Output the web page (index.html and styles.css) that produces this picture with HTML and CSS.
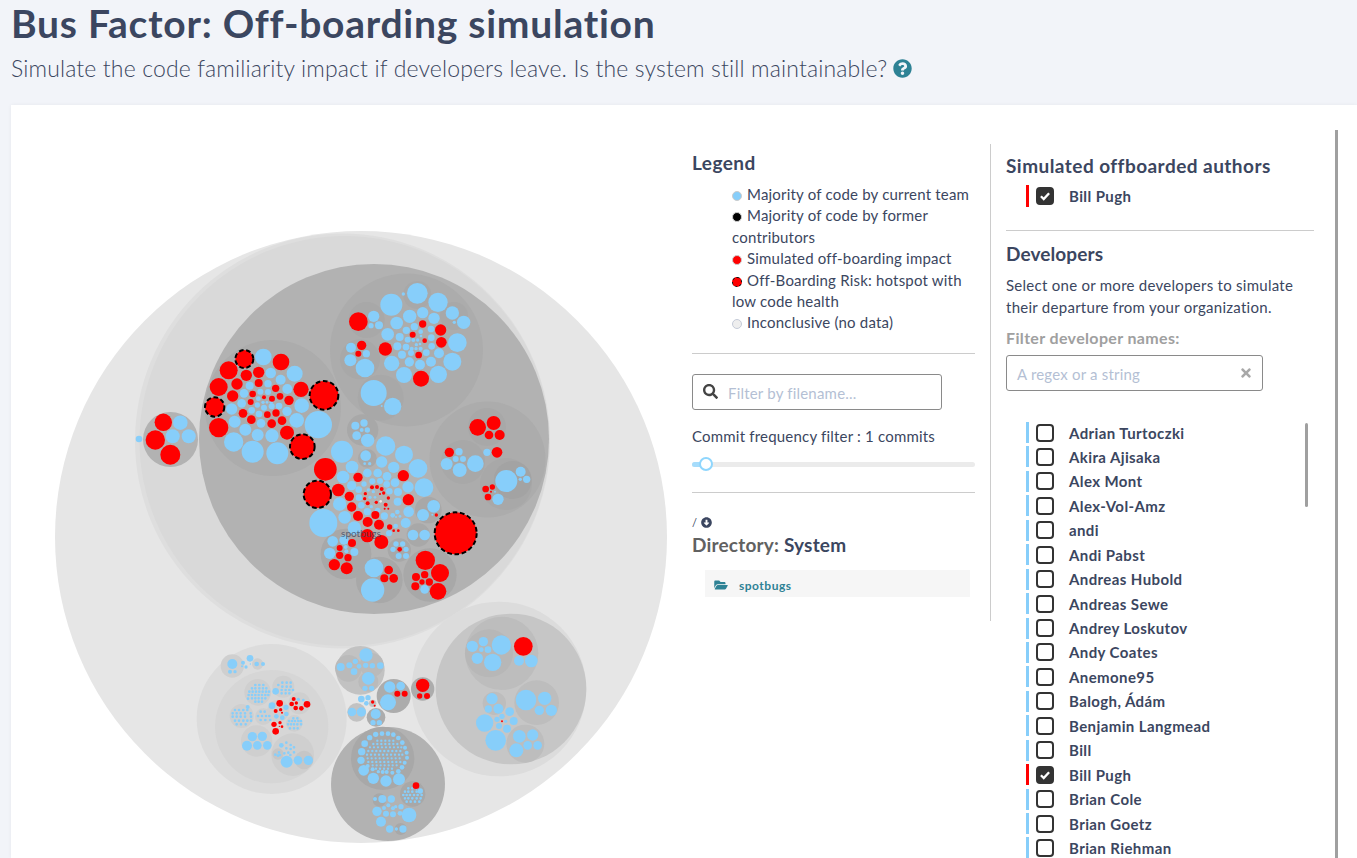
FILE: index.html
```html
<!DOCTYPE html>
<html lang="en">
<head>
<meta charset="utf-8">
<title>Bus Factor: Off-boarding simulation</title>
<link rel="stylesheet" href="styles.css">
</head>
<body>
<header class="head">
  <h1>Bus Factor: Off-boarding simulation</h1>
  <p class="sub">Simulate the code familiarity impact if developers leave. Is the system still maintainable?
    <svg class="help" viewBox="0 0 512 512"><path d="M504 256c0 136.997-111.043 248-248 248S8 392.997 8 256C8 119.083 119.043 8 256 8s248 111.083 248 248zM262.655 90c-54.497 0-89.255 22.957-116.549 63.758-3.536 5.286-2.353 12.415 2.715 16.258l34.699 26.31c5.205 3.947 12.621 3.008 16.665-2.122 17.864-22.658 30.113-35.797 57.303-35.797 20.429 0 45.698 13.148 45.698 32.958 0 14.976-12.363 22.667-32.534 33.976C247.128 238.528 216 254.941 216 296v4c0 6.627 5.373 12 12 12h56c6.627 0 12-5.373 12-12v-1.333c0-28.462 83.186-29.647 83.186-106.667 0-58.002-60.165-102-116.531-102zM256 338c-25.365 0-46 20.635-46 46 0 25.364 20.635 46 46 46s46-20.636 46-46c0-25.365-20.635-46-46-46z"/></svg>
  </p>
</header>
<main class="card">
  <svg class="map" viewBox="11 105 665 753">
    <circle class="g0" cx="361" cy="537" r="306"/>
    <circle class="g1" cx="342.5" cy="441" r="207.5"/>
    <circle class="g2" cx="344.5" cy="441" r="205"/>
    <circle class="g4" cx="374" cy="439" r="175"/>
    <circle class="g4" cx="170.5" cy="439.5" r="27.5"/>
    <circle class="g5" cx="273" cy="408" r="68"/>
    <circle class="g5" cx="406.5" cy="350" r="76.5"/>
    <circle class="g5" cx="487.5" cy="459.5" r="58"/>
    <circle class="g6" cx="487" cy="427" r="19"/>
    <circle class="g6" cx="463" cy="462" r="22"/>
    <circle class="g6" cx="506" cy="484" r="26"/>
    <circle class="g7" cx="512.7" cy="480" r="19"/>
    <circle class="g6" cx="366.7" cy="320" r="18"/>
    <circle class="g6" cx="360" cy="359.3" r="20"/>
    <circle class="g6" cx="380.7" cy="397.7" r="23"/>
    <circle class="g6" cx="417.3" cy="295" r="14"/>
    <circle class="g6" cx="454" cy="316" r="14"/>
    <circle class="blue" cx="139" cy="439" r="3.3"/>
    <circle class="blue" cx="180.3" cy="422.7" r="7.3"/>
    <circle class="blue" cx="172.7" cy="436.3" r="7"/>
    <circle class="blue" cx="188.7" cy="436.3" r="7"/>
    <circle class="red" cx="163.3" cy="422.3" r="8.7"/>
    <circle class="red" cx="155.3" cy="440" r="9.7"/>
    <circle class="red" cx="170.3" cy="454.7" r="10"/>

    <g transform="translate(190 260) scale(.33333)">
      <g class="blue">
        <circle cx="220" cy="291" r="25"/><circle cx="314" cy="341" r="24"/><circle cx="242" cy="339" r="16"/><circle cx="272" cy="359" r="15"/><circle cx="179" cy="377" r="12"/><circle cx="234" cy="371" r="11"/><circle cx="292" cy="387" r="15"/><circle cx="162" cy="400" r="13"/><circle cx="211" cy="395" r="9"/><circle cx="234" cy="396" r="9"/><circle cx="205" cy="416" r="7"/><circle cx="155" cy="430" r="13"/><circle cx="202" cy="435" r="8"/><circle cx="219" cy="427" r="5"/><circle cx="231" cy="427" r="4"/><circle cx="244" cy="427" r="5"/><circle cx="222" cy="443" r="9"/><circle cx="245" cy="439" r="9"/><circle cx="267" cy="438" r="10"/><circle cx="335" cy="437" r="22"/><circle cx="125" cy="447" r="17"/><circle cx="185" cy="451" r="10"/><circle cx="291" cy="454" r="14"/><circle cx="207" cy="462" r="10"/><circle cx="320" cy="481" r="22"/><circle cx="385" cy="494" r="41"/><circle cx="134" cy="485" r="18"/><circle cx="213" cy="490" r="13"/><circle cx="166" cy="509" r="18"/><circle cx="203" cy="525" r="18"/><circle cx="246" cy="527" r="20"/><circle cx="131" cy="546" r="29"/><circle cx="188" cy="575" r="33"/><circle cx="262" cy="580" r="33"/>
      </g>
      <g class="red">
        <circle cx="273" cy="306" r="25"/><circle cx="116" cy="331" r="27"/><circle cx="206" cy="337" r="17"/><circle cx="169" cy="346" r="17"/><circle cx="86" cy="381" r="27"/><circle cx="141" cy="372" r="17"/><circle cx="206" cy="369" r="12"/><circle cx="257" cy="385" r="11"/><circle cx="333" cy="388" r="23"/><circle cx="128" cy="408" r="17"/><circle cx="188" cy="402" r="10"/><circle cx="222" cy="412" r="6"/><circle cx="246" cy="416" r="9"/><circle cx="270" cy="409" r="10"/><circle cx="297" cy="421" r="14"/><circle cx="182" cy="426" r="9"/><circle cx="159" cy="460" r="13"/><circle cx="232" cy="464" r="10"/><circle cx="258" cy="459" r="11"/><circle cx="184" cy="479" r="13"/><circle cx="276" cy="482" r="13"/><circle cx="245" cy="491" r="13"/><circle cx="86" cy="503" r="29"/><circle cx="291" cy="518" r="21"/>
      </g>
      <g class="risk">
        <circle cx="163" cy="297" r="27"/><circle cx="402" cy="406" r="43"/><circle cx="74" cy="441" r="29"/><circle cx="337" cy="560" r="37"/>
      </g>
    </g>

    <g transform="translate(330 270) scale(.33333)">
      <g class="blue">
        <circle cx="131" cy="139" r="17"/><circle cx="147" cy="166" r="12"/><circle cx="123" cy="167" r="8"/><circle cx="63" cy="233" r="15"/><circle cx="109" cy="251" r="11"/><circle cx="61" cy="271" r="18"/><circle cx="105" cy="294" r="28"/><circle cx="131" cy="369" r="39"/><circle cx="188" cy="409" r="26"/><circle cx="155" cy="408" r="3"/>
        <circle cx="184" cy="104" r="33"/><circle cx="262" cy="70" r="31"/><circle cx="324" cy="97" r="29"/><circle cx="220" cy="72" r="5"/><circle cx="367" cy="129" r="20"/><circle cx="401" cy="157" r="20"/><circle cx="373" cy="157" r="5"/><circle cx="239" cy="139" r="20"/><circle cx="278" cy="128" r="17"/><circle cx="312" cy="145" r="17"/><circle cx="200" cy="159" r="19"/><circle cx="253" cy="170" r="11"/><circle cx="229" cy="181" r="11"/><circle cx="272" cy="185" r="7"/><circle cx="303" cy="177" r="10"/><circle cx="173" cy="193" r="19"/><circle cx="209" cy="201" r="12"/><circle cx="304" cy="203" r="10"/><circle cx="382" cy="218" r="28"/><circle cx="233" cy="209" r="9"/><circle cx="250" cy="210" r="6"/><circle cx="263" cy="210" r="5"/><circle cx="273" cy="198" r="4"/><circle cx="202" cy="229" r="12"/><circle cx="228" cy="231" r="10"/><circle cx="259" cy="224" r="5"/><circle cx="270" cy="222" r="4"/><circle cx="305" cy="229" r="10"/><circle cx="245" cy="236" r="6"/><circle cx="258" cy="236" r="5"/><circle cx="272" cy="236" r="6"/><circle cx="289" cy="248" r="10"/><circle cx="327" cy="250" r="15"/><circle cx="216" cy="254" r="12"/><circle cx="243" cy="249" r="9"/><circle cx="367" cy="275" r="27"/><circle cx="185" cy="280" r="23"/><circle cx="238" cy="276" r="14"/><circle cx="303" cy="275" r="15"/><circle cx="270" cy="284" r="15"/><circle cx="222" cy="315" r="24"/><circle cx="325" cy="313" r="26"/>
      </g>
      <g class="red">
        <circle cx="85" cy="155" r="28"/><circle cx="95" cy="226" r="14"/><circle cx="85" cy="251" r="9"/><circle cx="278" cy="162" r="11"/><circle cx="332" cy="180" r="17"/><circle cx="248" cy="194" r="9"/><circle cx="284" cy="212" r="7"/><circle cx="334" cy="217" r="16"/><circle cx="166" cy="237" r="20"/><circle cx="266" cy="255" r="10"/><circle cx="273" cy="326" r="24"/>
      </g>
    </g>

    <g transform="translate(430 400) scale(.33333)">
      <g class="blue">
        <circle cx="87" cy="155" r="11"/><circle cx="77" cy="177" r="9"/><circle cx="99" cy="177" r="9"/><circle cx="50" cy="192" r="18"/><circle cx="89" cy="210" r="21"/><circle cx="136" cy="191" r="25"/><circle cx="171" cy="157" r="11"/><circle cx="229" cy="243" r="33"/><circle cx="272" cy="215" r="15"/><circle cx="290" cy="238" r="11"/><circle cx="271" cy="238" r="5"/><circle cx="195" cy="275" r="3"/><circle cx="204" cy="298" r="17"/>
      </g>
      <g class="red">
        <circle cx="143" cy="82" r="25"/><circle cx="191" cy="69" r="21"/><circle cx="177" cy="105" r="13"/><circle cx="209" cy="105" r="15"/><circle cx="58" cy="157" r="14"/><circle cx="201" cy="157" r="16"/><circle cx="167" cy="267" r="10"/><circle cx="187" cy="261" r="8"/><circle cx="174" cy="291" r="10"/><circle cx="183" cy="275" r="3"/>
      </g>
      <circle class="risk" cx="77" cy="400" r="63"/>
    </g>

    <g transform="translate(290 420) scale(.33333)">
      <g class="g6">
        <circle cx="218" cy="30" r="47"/><circle cx="232" cy="115" r="28"/><circle cx="415" cy="270" r="40"/><circle cx="385" cy="345" r="35"/><circle cx="328" cy="390" r="35"/><circle cx="168" cy="402" r="76"/><circle cx="268" cy="480" r="70"/><circle cx="420" cy="465" r="80"/>
      </g>
      <g class="blue">
        <circle cx="196" cy="17" r="12"/><circle cx="222" cy="9" r="11"/><circle cx="215" cy="30" r="6"/><circle cx="232" cy="30" r="8"/><circle cx="200" cy="47" r="13"/><circle cx="233" cy="61" r="20"/><circle cx="227" cy="107" r="16"/><circle cx="224" cy="131" r="4"/><circle cx="239" cy="131" r="5"/>
        <circle cx="100" cy="309" r="42"/><circle cx="156" cy="95" r="33"/><circle cx="287" cy="78" r="29"/><circle cx="342" cy="104" r="27"/><circle cx="384" cy="145" r="28"/><circle cx="402" cy="203" r="28"/><circle cx="186" cy="141" r="19"/><circle cx="275" cy="126" r="17"/><circle cx="311" cy="142" r="17"/><circle cx="159" cy="171" r="19"/><circle cx="232" cy="159" r="13"/><circle cx="263" cy="159" r="13"/><circle cx="291" cy="169" r="13"/><circle cx="315" cy="188" r="13"/><circle cx="354" cy="201" r="17"/><circle cx="185" cy="197" r="14"/><circle cx="247" cy="184" r="9"/><circle cx="270" cy="183" r="9"/><circle cx="290" cy="193" r="10"/><circle cx="324" cy="216" r="12"/><circle cx="206" cy="209" r="10"/><circle cx="222" cy="192" r="8"/><circle cx="298" cy="214" r="10"/><circle cx="207" cy="233" r="10"/><circle cx="235" cy="210" r="5"/><circle cx="250" cy="215" r="5"/><circle cx="240" cy="232" r="5"/><circle cx="255" cy="232" r="4"/><circle cx="323" cy="245" r="12"/><circle cx="149" cy="252" r="20"/><circle cx="214" cy="256" r="10"/><circle cx="244" cy="260" r="5"/><circle cx="232" cy="275" r="11"/><circle cx="263" cy="271" r="8"/><circle cx="356" cy="275" r="16"/><circle cx="283" cy="288" r="11"/><circle cx="164" cy="292" r="19"/><circle cx="308" cy="286" r="7"/><circle cx="322" cy="276" r="7"/><circle cx="330" cy="289" r="4"/><circle cx="318" cy="291" r="3"/><circle cx="347" cy="309" r="15"/><circle cx="193" cy="324" r="20"/><circle cx="317" cy="318" r="7"/><circle cx="297" cy="340" r="9"/>
        <circle cx="399" cy="285" r="18"/><circle cx="431" cy="259" r="19"/><circle cx="427" cy="284" r="3"/><circle cx="369" cy="345" r="16"/><circle cx="404" cy="345" r="16"/>
        <circle cx="318" cy="372" r="8"/><circle cx="338" cy="372" r="8"/><circle cx="309" cy="388" r="8"/><circle cx="348" cy="388" r="8"/><circle cx="326" cy="408" r="9"/><circle cx="348" cy="408" r="9"/>
        <circle cx="128" cy="364" r="16"/><circle cx="162" cy="360" r="14"/><circle cx="167" cy="381" r="6"/><circle cx="119" cy="400" r="17"/><circle cx="169" cy="394" r="6"/><circle cx="193" cy="396" r="12"/>
        <circle cx="252" cy="444" r="28"/><circle cx="248" cy="510" r="35"/><circle cx="404" cy="508" r="13"/>
      </g>
      <circle class="pale" cx="272" cy="244" r="4"/>
      <g class="red">
        <circle cx="106" cy="148" r="34"/><circle cx="340" cy="167" r="17"/><circle cx="204" cy="172" r="14"/><circle cx="145" cy="210" r="19"/><circle cx="246" cy="202" r="6"/><circle cx="261" cy="201" r="6"/><circle cx="275" cy="207" r="6"/><circle cx="355" cy="239" r="17"/><circle cx="178" cy="229" r="14"/><circle cx="226" cy="221" r="5"/><circle cx="281" cy="219" r="5"/><circle cx="270" cy="222" r="3"/><circle cx="224" cy="236" r="5"/><circle cx="295" cy="234" r="5"/><circle cx="185" cy="261" r="14"/><circle cx="233" cy="250" r="6"/><circle cx="259" cy="247" r="5"/><circle cx="287" cy="254" r="6"/><circle cx="284" cy="266" r="3"/><circle cx="295" cy="266" r="3"/><circle cx="256" cy="285" r="12"/><circle cx="204" cy="288" r="15"/><circle cx="233" cy="306" r="15"/><circle cx="267" cy="314" r="15"/><circle cx="232" cy="347" r="20"/><circle cx="274" cy="366" r="21"/><circle cx="299" cy="321" r="8"/><circle cx="311" cy="332" r="4"/><circle cx="325" cy="332" r="4"/><circle cx="439" cy="285" r="5"/><circle cx="329" cy="388" r="7"/>
        <circle cx="186" cy="369" r="12"/><circle cx="149" cy="384" r="9"/><circle cx="149" cy="406" r="11"/><circle cx="174" cy="413" r="11"/><circle cx="133" cy="434" r="17"/><circle cx="170" cy="445" r="18"/>
        <circle cx="296" cy="450" r="13"/><circle cx="283" cy="475" r="12"/><circle cx="311" cy="475" r="13"/>
        <circle cx="406" cy="421" r="29"/><circle cx="450" cy="459" r="27"/><circle cx="444" cy="514" r="25"/><circle cx="378" cy="471" r="12"/><circle cx="404" cy="464" r="11"/><circle cx="418" cy="486" r="11"/><circle cx="396" cy="486" r="8"/><circle cx="376" cy="499" r="12"/>
      </g>
      <circle class="risk" cx="82" cy="223" r="41"/>
    </g>
    <text class="label" x="361" y="537">spotbugs</text>

    <g transform="translate(190 640) scale(.33333)">
      <circle class="l1" cx="245" cy="237" r="225"/>
      <circle class="l2" cx="245" cy="260" r="170"/>
      <g class="l3">
        <circle cx="127" cy="78" r="35"/><circle cx="203" cy="72" r="17"/><circle cx="203" cy="157" r="40"/><circle cx="280" cy="140" r="33"/><circle cx="328" cy="190" r="33"/><circle cx="265" cy="212" r="33"/><circle cx="155" cy="228" r="36"/><circle cx="220" cy="230" r="25"/><circle cx="313" cy="250" r="25"/><circle cx="200" cy="303" r="47"/><circle cx="308" cy="344" r="64"/>
      </g>
      <circle class="l4" cx="264" cy="342" r="17"/>
      <circle class="l4" cx="342" cy="360" r="28"/>
      <circle class="g3" cx="511" cy="91" r="73"/>
      <circle class="g3b" cx="475" cy="85" r="40"/>
      <circle class="g3b" cx="545" cy="75" r="36"/>
      <circle class="g3b" cx="535" cy="125" r="30"/>
      <circle class="g5" cx="611" cy="168" r="51"/>
      <circle class="g3" cx="500" cy="217" r="28"/>
      <circle class="g5" cx="558" cy="232" r="28"/>
      <circle class="g4" cx="594" cy="432" r="171"/>
      <circle class="g6" cx="578" cy="355" r="95"/>
      <circle class="g6" cx="668" cy="462" r="38"/>
      <circle class="g6" cx="568" cy="480" r="20"/>
      <circle class="g6" cx="632" cy="567" r="18"/>
      <circle class="g3" cx="548" cy="190" r="11"/>
      <path class="dots r5" d="M196 135h0M208 135h0M220 135h0M186 145h0M196 145h0M208 145h0M219 145h0M229 145h0M178 155h0M188 155h0M198 155h0M208 155h0M218 155h0M228 155h0M237 155h0M176 165h0M186 165h0M196 165h0M206 165h0M216 165h0M226 165h0M235 165h0M174 176h0M186 175h0M196 175h0M206 175h0M216 175h0M226 175h0M196 185h0M206 185h0M216 185h0M265 135h0M277 128h0M290 128h0M302 128h0M277 140h0M290 140h0M302 140h0M275 150h0M287 150h0M298 150h0M309 150h0M275 160h0M287 160h0M298 160h0M135 210h0M147 210h0M160 210h0M172 210h0M128 220h0M140 220h0M152 220h0M165 220h0M182 220h0M128 230h0M140 230h0M152 230h0M165 230h0M183 230h0M135 242h0M147 242h0M160 242h0M172 242h0M183 242h0M140 253h0M153 253h0M167 253h0M212 215h0M224 215h0M204 228h0M216 228h0M228 228h0M238 228h0M212 240h0M226 240h0M241 240h0M310 235h0M322 235h0M297 243h0M306 243h0M315 243h0M325 243h0M333 243h0M294 253h0M303 253h0M312 253h0M322 253h0M333 253h0M300 265h0M312 265h0M323 265h0M289 308h0M302 315h0M289 325h0M302 327h0M312 322h0M312 337h0M295 338h0M283 340h0M301 345h0M267 337h0M264 347h0M256 344h0M270 345h0M655 445h0M667 445h0M680 445h0M645 455h0M655 455h0M667 455h0M680 455h0M640 465h0M650 465h0M660 465h0M672 465h0M683 465h0M695 465h0M645 475h0M655 475h0M667 475h0M680 475h0M692 475h0M650 485h0M662 485h0M675 485h0M688 485h0"/>
      <path class="dots r4" d="M562 302h0M574 302h0M586 302h0M598 302h0M610 302h0M550 312h0M562 312h0M574 312h0M586 312h0M598 312h0M610 312h0M622 312h0M540 322h0M552 322h0M564 322h0M576 322h0M588 322h0M600 322h0M612 322h0M624 322h0M634 322h0M535 333h0M547 333h0M559 333h0M571 333h0M583 333h0M595 333h0M607 333h0M619 333h0M631 333h0M531 344h0M543 344h0M555 344h0M567 344h0M579 344h0M591 344h0M603 344h0M615 344h0M627 344h0M637 344h0M533 355h0M545 355h0M557 355h0M569 355h0M581 355h0M593 355h0M605 355h0M617 355h0M629 355h0M535 366h0M547 366h0M559 366h0M571 366h0M583 366h0M595 366h0M607 366h0M619 366h0M631 366h0M548 376h0M560 376h0M572 376h0M584 376h0M596 376h0M608 376h0M620 376h0M558 386h0M570 386h0M582 386h0M594 386h0M606 386h0"/>
      <g class="blue">
        <circle cx="127" cy="72" r="15"/><circle cx="120" cy="95" r="6"/><circle cx="135" cy="95" r="5"/><circle cx="159" cy="68" r="6"/><circle cx="180" cy="55" r="10"/><circle cx="168" cy="81" r="5"/><circle cx="156" cy="79" r="3"/><circle cx="181" cy="72" r="2"/><circle cx="200" cy="72" r="7"/><circle cx="219" cy="72" r="6"/>
        <circle cx="257" cy="154" r="10"/><circle cx="325" cy="178" r="5"/><circle cx="340" cy="180" r="4"/><circle cx="173" cy="201" r="6"/>
        <circle cx="246" cy="197" r="10"/><circle cx="288" cy="202" r="8"/><circle cx="289" cy="222" r="7"/><circle cx="259" cy="229" r="7"/><circle cx="277" cy="233" r="7"/>
        <circle cx="187" cy="290" r="14"/><circle cx="217" cy="289" r="14"/><circle cx="171" cy="317" r="15"/><circle cx="202" cy="316" r="13"/><circle cx="232" cy="316" r="13"/>
        <circle cx="274" cy="316" r="7"/><circle cx="290" cy="365" r="18"/><circle cx="324" cy="361" r="13"/><circle cx="355" cy="361" r="14"/>
        <circle cx="528" cy="45" r="20"/><circle cx="452" cy="81" r="12"/><circle cx="478" cy="76" r="9"/><circle cx="496" cy="64" r="8"/><circle cx="507" cy="79" r="7"/><circle cx="492" cy="95" r="10"/><circle cx="527" cy="76" r="8"/><circle cx="547" cy="77" r="8"/><circle cx="571" cy="77" r="10"/><circle cx="535" cy="115" r="19"/><circle cx="525" cy="145" r="8"/><circle cx="545" cy="145" r="8"/>
        <circle cx="599" cy="141" r="17"/><circle cx="632" cy="138" r="13"/><circle cx="594" cy="187" r="24"/><circle cx="514" cy="177" r="10"/><circle cx="534" cy="173" r="8"/><circle cx="529" cy="190" r="7"/>
        <circle cx="486" cy="216" r="13"/><circle cx="514" cy="216" r="14"/><circle cx="557" cy="222" r="15"/><circle cx="549" cy="248" r="8"/><circle cx="568" cy="248" r="8"/>
        <circle cx="550" cy="415" r="17"/><circle cx="588" cy="423" r="17"/><circle cx="627" cy="418" r="18"/><circle cx="521" cy="391" r="16"/><circle cx="513" cy="361" r="11"/><circle cx="515" cy="335" r="11"/><circle cx="524" cy="311" r="10"/><circle cx="539" cy="293" r="8"/><circle cx="557" cy="283" r="8"/><circle cx="576" cy="281" r="7"/><circle cx="594" cy="281" r="7"/><circle cx="610" cy="284" r="7"/><circle cx="625" cy="294" r="7"/><circle cx="637" cy="308" r="7"/><circle cx="645" cy="323" r="6"/><circle cx="650" cy="338" r="6"/><circle cx="651" cy="353" r="6"/><circle cx="644" cy="368" r="6"/><circle cx="636" cy="382" r="7"/><circle cx="625" cy="394" r="7"/><circle cx="607" cy="398" r="6"/><circle cx="590" cy="396" r="6"/><circle cx="578" cy="396" r="6"/><circle cx="565" cy="395" r="5"/><circle cx="548" cy="388" r="6"/><circle cx="533" cy="378" r="6"/>
        <circle cx="555" cy="477" r="6"/><circle cx="577" cy="477" r="12"/><circle cx="604" cy="477" r="11"/><circle cx="691" cy="453" r="8"/><circle cx="561" cy="514" r="14"/><circle cx="582" cy="504" r="6"/><circle cx="595" cy="496" r="6"/><circle cx="609" cy="505" r="6"/><circle cx="617" cy="500" r="5"/><circle cx="633" cy="500" r="8"/><circle cx="588" cy="521" r="9"/><circle cx="609" cy="523" r="9"/><circle cx="630" cy="520" r="7"/><circle cx="657" cy="525" r="22"/><circle cx="573" cy="545" r="15"/><circle cx="599" cy="567" r="11"/><circle cx="619" cy="567" r="5"/><circle cx="639" cy="567" r="11"/>
      </g>
      <g class="red">
        <circle cx="311" cy="177" r="6"/><circle cx="319" cy="189" r="5"/><circle cx="351" cy="193" r="10"/><circle cx="305" cy="192" r="7"/><circle cx="317" cy="204" r="7"/><circle cx="334" cy="205" r="7"/>
        <circle cx="269" cy="190" r="10"/><circle cx="257" cy="213" r="6"/><circle cx="272" cy="209" r="5"/><circle cx="276" cy="218" r="3"/><circle cx="252" cy="253" r="8"/><circle cx="270" cy="248" r="5"/><circle cx="257" cy="274" r="10"/><circle cx="268" cy="259" r="2"/><circle cx="276" cy="260" r="4"/>
        <circle cx="622" cy="161" r="9"/><circle cx="644" cy="161" r="9"/><circle cx="548" cy="186" r="5"/><circle cx="554" cy="197" r="3"/><circle cx="678" cy="437" r="10"/>
      </g>
    </g>

    <g transform="translate(410 600) scale(.33333)">
      <circle class="l1" cx="267" cy="267" r="262"/>
      <circle class="s1" cx="303" cy="267" r="226"/>
      <circle class="s2" cx="275" cy="160" r="110"/>
      <circle class="s3" cx="237" cy="160" r="72"/>
      <circle class="s2" cx="380" cy="308" r="67"/>
      <circle class="s2" cx="253" cy="310" r="35"/>
      <circle class="s2" cx="346" cy="431" r="57"/>
      <circle class="g5" cx="38" cy="267" r="35"/>
      <g class="blue">
        <circle cx="187" cy="139" r="17"/><circle cx="220" cy="125" r="14"/><circle cx="214" cy="149" r="7"/><circle cx="234" cy="149" r="10"/><circle cx="202" cy="175" r="17"/><circle cx="248" cy="187" r="26"/><circle cx="274" cy="135" r="29"/><circle cx="327" cy="182" r="15"/><circle cx="364" cy="183" r="19"/>
        <circle cx="246" cy="296" r="17"/><circle cx="235" cy="327" r="11"/><circle cx="265" cy="326" r="15"/><circle cx="348" cy="300" r="31"/><circle cx="404" cy="295" r="20"/><circle cx="388" cy="331" r="14"/><circle cx="424" cy="331" r="17"/><circle cx="299" cy="335" r="13"/><circle cx="276" cy="349" r="8"/><circle cx="261" cy="358" r="8"/><circle cx="287" cy="364" r="5"/><circle cx="311" cy="363" r="12"/><circle cx="224" cy="369" r="26"/><circle cx="267" cy="378" r="9"/><circle cx="291" cy="386" r="12"/><circle cx="257" cy="421" r="31"/><circle cx="328" cy="409" r="19"/><circle cx="368" cy="405" r="17"/><circle cx="353" cy="436" r="13"/><circle cx="383" cy="436" r="13"/><circle cx="319" cy="451" r="21"/>
      </g>
      <g class="red">
        <circle cx="340" cy="139" r="28"/><circle cx="276" cy="364" r="3"/><circle cx="38" cy="256" r="20"/><circle cx="29" cy="288" r="8"/><circle cx="51" cy="288" r="9"/>
      </g>
    </g>
  </svg>

  <section class="controls">
    <h2 class="wide">Legend</h2>
    <ul class="legend">
      <li><span class="dot dot-blue"></span>Majority of code by current team</li>
      <li><span class="dot dot-black"></span>Majority of code by former contributors</li>
      <li><span class="dot dot-red"></span>Simulated off-boarding impact</li>
      <li><span class="dot dot-risk"></span>Off-Boarding Risk: hotspot with low code health</li>
      <li><span class="dot dot-none"></span>Inconclusive (no data)</li>
    </ul>
    <hr class="rule rule-a">
    <div class="field field-file">
      <svg class="search" viewBox="0 0 512 512"><path d="M505 442.7L405.3 343c-4.5-4.5-10.6-7-17-7H372c27.6-35.3 44-79.7 44-128C416 93.1 322.9 0 208 0S0 93.1 0 208s93.1 208 208 208c48.3 0 92.7-16.4 128-44v16.3c0 6.4 2.5 12.5 7 17l99.7 99.7c9.4 9.4 24.6 9.4 33.9 0l28.3-28.3c9.4-9.4 9.4-24.6.1-34zM208 336c-70.7 0-128-57.2-128-128 0-70.7 57.2-128 128-128 70.7 0 128 57.2 128 128 0 70.7-57.2 128-128 128z"/></svg>
      <span class="placeholder">Filter by filename...</span>
    </div>
    <p class="freq">Commit frequency filter : 1 commits</p>
    <div class="slider"><span class="slider-fill"></span><span class="slider-knob"></span></div>
    <hr class="rule rule-b">
    <div class="crumb">/ <svg class="down" viewBox="0 0 512 512"><path d="M504 256c0 137-111 248-248 248S8 393 8 256 119 8 256 8s248 111 248 248zM212 140v116h-70.9c-10.7 0-16.1 13-8.5 20.5l114.9 114.3c4.7 4.7 12.2 4.7 16.9 0l114.9-114.3c7.6-7.6 2.2-20.5-8.5-20.5H300V140c0-6.6-5.4-12-12-12h-64c-6.6 0-12 5.4-12 12z"/></svg></div>
    <h3 class="dir"><span class="dir-key">Directory:</span> System</h3>
    <div class="tree-row">
      <svg class="folder" viewBox="0 0 576 512"><path d="M572.694 292.093L500.27 416.248A63.997 63.997 0 0 1 444.989 448H45.025c-18.523 0-30.064-20.093-20.731-36.093l72.424-124.155A64 64 0 0 1 152 256h399.964c18.523 0 30.064 20.093 20.73 36.093zM152 224h328v-48c0-26.51-21.49-48-48-48H272l-64-64H48C21.49 64 0 85.49 0 112v278.046l69.077-118.418C86.214 242.25 117.989 224 152 224z"/></svg>
      <span>spotbugs</span>
    </div>
  </section>

  <section class="authors">
    <h2 class="wide off-title">Simulated offboarded authors</h2>
    <div class="dev dev-off selected"><span class="box on"><svg viewBox="0 0 12 12"><path d="M2.5 6.2l2.4 2.4 4.6-5"/></svg></span><span class="name">Bill Pugh</span></div>
    <hr class="rule rule-c">
    <h2 class="dev-title">Developers</h2>
    <p class="hint">Select one or more developers to simulate their departure from your organization.</p>
    <label class="filter-label">Filter developer names:</label>
    <div class="field field-dev">
      <span class="placeholder">A regex or a string</span>
      <svg class="clear" viewBox="0 0 352 512"><path d="M242.72 256l100.07-100.07c12.28-12.28 12.28-32.19 0-44.48l-22.24-22.24c-12.28-12.28-32.19-12.28-44.48 0L176 189.28 75.93 89.21c-12.28-12.28-32.19-12.28-44.48 0L9.21 111.45c-12.28 12.28-12.28 32.19 0 44.48L109.28 256 9.21 356.07c-12.28 12.28-12.28 32.19 0 44.48l22.24 22.24c12.28 12.28 32.2 12.28 44.48 0L176 322.72l100.07 100.07c12.28 12.28 32.2 12.28 44.48 0l22.24-22.24c12.28-12.28 12.28-32.19 0-44.48L242.72 256z"/></svg>
    </div>
    <div class="devs">
      <span class="inner-thumb"></span>
      <div class="dev"><span class="box"></span><span class="name">Adrian Turtoczki</span></div>
      <div class="dev"><span class="box"></span><span class="name">Akira Ajisaka</span></div>
      <div class="dev"><span class="box"></span><span class="name">Alex Mont</span></div>
      <div class="dev"><span class="box"></span><span class="name">Alex-Vol-Amz</span></div>
      <div class="dev"><span class="box"></span><span class="name">andi</span></div>
      <div class="dev"><span class="box"></span><span class="name">Andi Pabst</span></div>
      <div class="dev"><span class="box"></span><span class="name">Andreas Hubold</span></div>
      <div class="dev"><span class="box"></span><span class="name">Andreas Sewe</span></div>
      <div class="dev"><span class="box"></span><span class="name">Andrey Loskutov</span></div>
      <div class="dev"><span class="box"></span><span class="name">Andy Coates</span></div>
      <div class="dev"><span class="box"></span><span class="name">Anemone95</span></div>
      <div class="dev"><span class="box"></span><span class="name">Balogh, Ádám</span></div>
      <div class="dev"><span class="box"></span><span class="name">Benjamin Langmead</span></div>
      <div class="dev"><span class="box"></span><span class="name">Bill</span></div>
      <div class="dev dev-off"><span class="box on"><svg viewBox="0 0 12 12"><path d="M2.5 6.2l2.4 2.4 4.6-5"/></svg></span><span class="name">Bill Pugh</span></div>
      <div class="dev"><span class="box"></span><span class="name">Brian Cole</span></div>
      <div class="dev"><span class="box"></span><span class="name">Brian Goetz</span></div>
      <div class="dev"><span class="box"></span><span class="name">Brian Riehman</span></div>
    </div>
  </section>
  <span class="page-thumb"></span>
</main>
</body>
</html>
```
FILE: styles.css
```css
* { box-sizing: border-box; }
html, body { height: 100%; overflow: hidden; }
body {
  margin: 0;
  background: #f2f4f9;
  color: #3b4660;
  font-family: Lato, "Liberation Sans", sans-serif;
  font-size: 15px;
  letter-spacing: .2px;
}
.head { height: 105px; padding-left: 11px; }
h1 { margin: 0; font-size: 39px; line-height: 46px; font-weight: 700; letter-spacing: .74px; }
.sub { margin: 0; padding-top: 5px; font-size: 23px; line-height: 34px; font-weight: 300; letter-spacing: .14px; display: flex; align-items: center; gap: 6px; }
.help { width: 19px; height: 19px; fill: #2e8295; }
.card {
  position: relative;
  display: flex;
  align-items: flex-start;
  margin-left: 11px;
  height: 753px;
  background: #fff;
  overflow: hidden;
  box-shadow: 0 0 4px rgba(0, 0, 0, .05);
}
.map { flex: none; width: 665px; height: 753px; }
.g0 { fill: #e6e6e6; }
.g1 { fill: #dedede; }
.g2 { fill: #d9d9d9; }
.g3 { fill: #c2c2c2; }
.g3b { fill: #bababa; }
.g4 { fill: #b2b2b2; }
.g5 { fill: #acacac; }
.g6 { fill: #a8a8a8; }
.g7 { fill: #a3a3a3; }
.l1 { fill: #dcdcdc; }
.l2 { fill: #d6d6d6; }
.l3 { fill: #cfcfcf; }
.l4 { fill: #c6c6c6; }
.s1 { fill: #c6c6c6; }
.s2 { fill: #bdbdbd; }
.s3 { fill: #b7b7b7; }
.blue { fill: #87cefa; }
.red { fill: #f00; }
.pale { fill: #e8e8e8; }
.risk { fill: #f00; stroke: #000; stroke-width: 6; stroke-dasharray: 14 8; }
.dots { fill: none; stroke: #87cefa; stroke-linecap: round; }
.r5 { stroke-width: 8; }
.r4 { stroke-width: 7; }
.label { font-size: 10px; fill: #3b4660; fill-opacity: .8; text-anchor: middle; letter-spacing: 0; }

.controls { flex: none; width: 283px; margin: 46px 15px 0 16px; }
h2 { margin: 0; font-size: 19px; line-height: 24px; font-weight: 700; letter-spacing: .1px; }
.wide { letter-spacing: .46px; }
.legend { list-style: none; margin: 9px 0 0; padding: 0 0 0 40px; font-size: 15px; line-height: 21.4px; }
.dot { display: inline-block; width: 10px; height: 10px; margin-right: 5px; border-radius: 50%; vertical-align: -1px; border: 1px solid #ccc; }
.dot-blue { background: #87cefa; }
.dot-black { background: #000; }
.dot-red { background: #f00; }
.dot-risk { background: #f00; border: 1.5px dashed #000; }
.dot-none { background: #eee; border-color: #c5cbd8; }
.rule { border: 0; border-top: 1px solid #ccc; margin: 0; }
.rule-a { margin-top: 19px; }
.field { display: flex; align-items: center; border: 1px solid #8a8a8a; border-radius: 3px; background: #fff; }
.field-file { width: 250px; height: 36px; margin-top: 20px; padding-left: 10px; gap: 10px; }
.field-dev { width: 257px; height: 36px; padding: 0 10px; justify-content: space-between; margin-top: 7px; }
.search { width: 15px; height: 15px; fill: #444; }
.placeholder { color: #b4bfd4; font-size: 15px; padding-top: 2px; }
.freq { margin: 15px 0 0; line-height: 22px; }
.slider { position: relative; height: 5px; margin-top: 15px; background: #ebebeb; border-radius: 3px; }
.slider-fill { position: absolute; left: 0; top: 0; width: 14px; height: 5px; background: #a6dcfb; border-radius: 3px; }
.slider-knob { position: absolute; left: 7px; top: -4.5px; width: 14px; height: 14px; border-radius: 50%; background: #fff; border: 2px solid #8fd6fd; }
.rule-b { margin-top: 25px; }
.crumb { margin-top: 23px; font-size: 11px; line-height: 14px; display: flex; align-items: center; gap: 4px; }
.down { width: 11px; height: 11px; fill: #3b4660; }
.dir { margin: 2px 0 0; font-size: 19px; line-height: 26px; font-weight: 700; letter-spacing: .2px; }
.dir-key { color: #616161; }
.tree-row { display: flex; align-items: center; gap: 11px; width: 265px; height: 27px; margin: 12px 0 0 13px; padding: 4px 0 0 9px; background: #f6f6f6; color: #2e8295; font-size: 12px; font-weight: 700; letter-spacing: .5px; }
.folder { width: 14px; height: 12px; fill: #2e8295; }

.authors { flex: none; width: 324px; height: 477px; margin-top: 39px; padding-left: 15px; border-left: 1px solid #ccc; }
.off-title { padding-top: 10px; }
.dev { display: flex; align-items: center; height: 21px; margin-bottom: 3.45px; margin-left: 20px; padding-left: 7px; border-left: 3px solid #87cefa; font-weight: 700; letter-spacing: .4px; }
.dev-off { border-left-color: #f00; }
.selected { height: 22px; margin-top: 7px; margin-bottom: 0; }
.box { flex: none; display: flex; width: 18px; height: 18px; border: 2px solid #333; border-radius: 4px; background: #fff; }
.box.on { background: #333; }
.box svg { width: 14px; height: 14px; fill: none; stroke: #fff; stroke-width: 2; }
.name { margin-left: 15px; }
.rule-c { width: 308px; margin-top: 23px; }
.dev-title { padding-top: 11px; }
.hint { margin: 8px 0 0; width: 300px; line-height: 22px; letter-spacing: .27px; }
.filter-label { display: block; margin-top: 10px; color: #a0a0a0; font-size: 16px; font-weight: 700; line-height: 20px; letter-spacing: .35px; }
.clear { width: 12px; height: 14px; fill: #a8a8a8; }
.devs { position: relative; margin-top: 31px; }
.inner-thumb { position: absolute; left: 299px; top: 1px; width: 3px; height: 84px; background: #a0a0a0; border-radius: 2px; }
.page-thumb { position: absolute; left: 1324px; top: 25px; width: 3px; height: 740px; background: #a0a0a0; }
```
